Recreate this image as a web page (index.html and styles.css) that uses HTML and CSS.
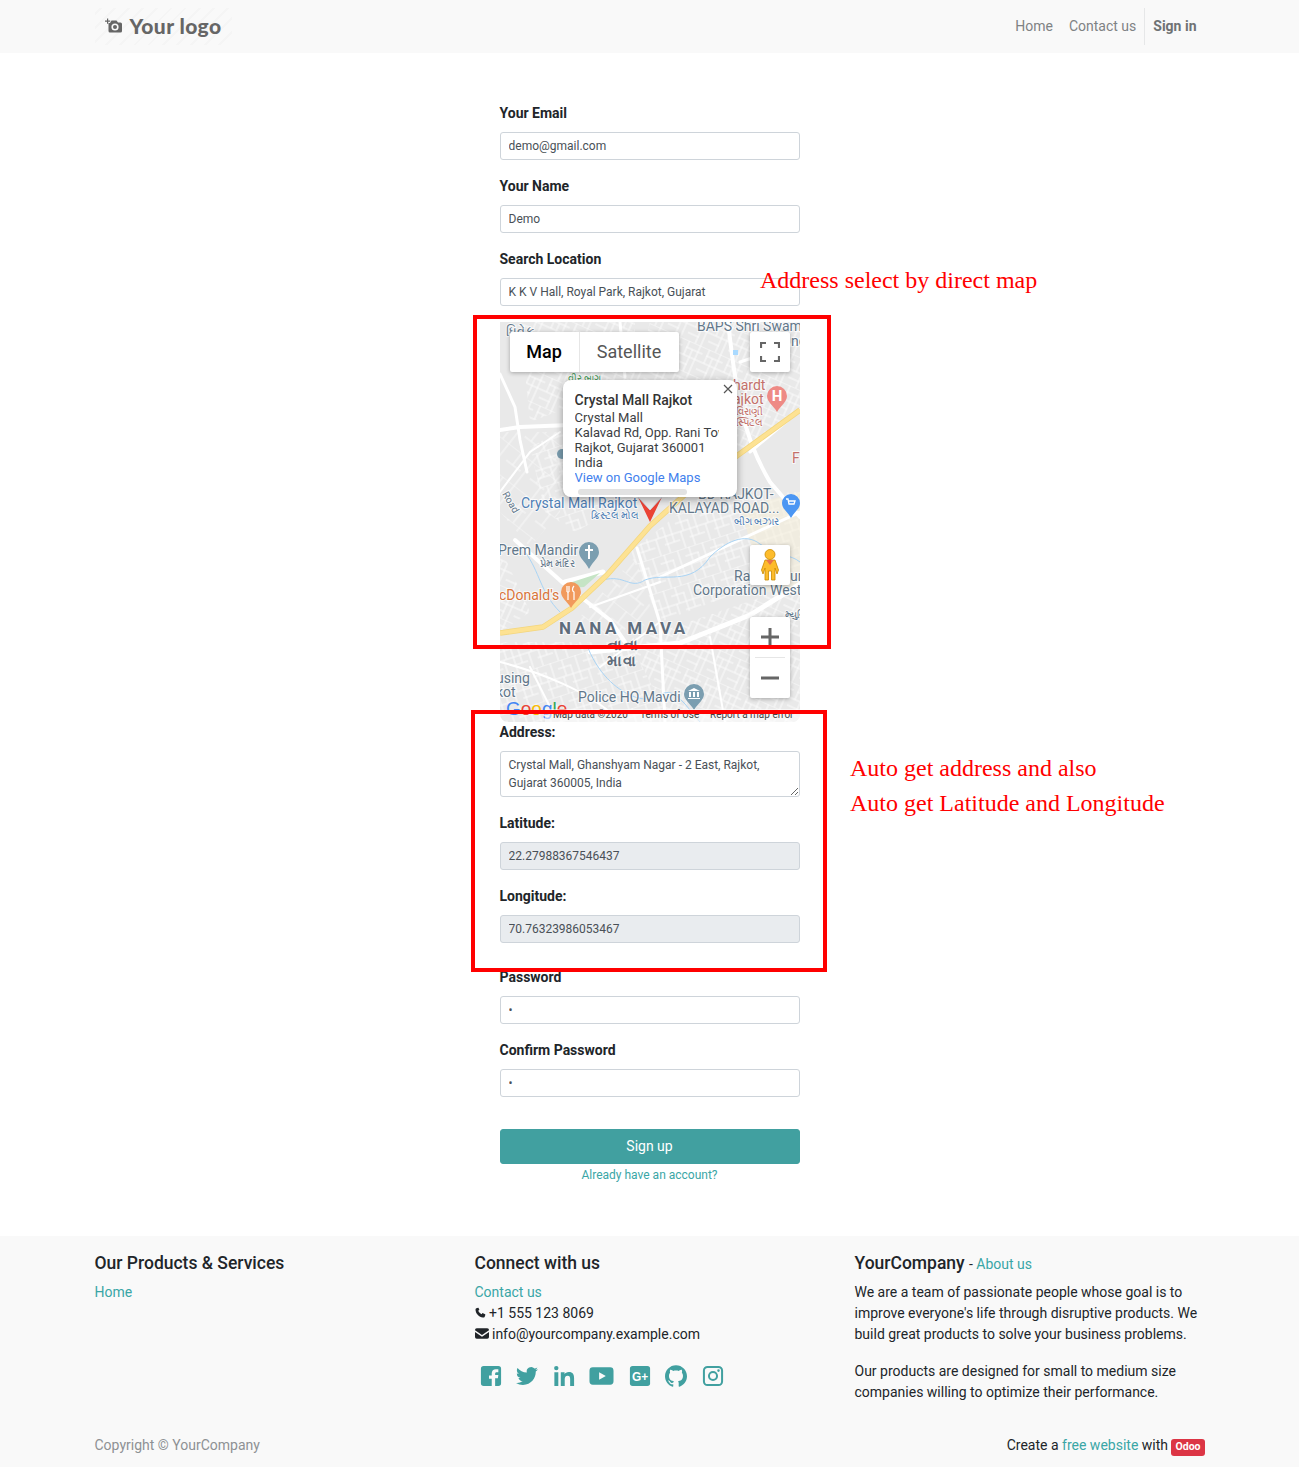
FILE: index.html
```html
<!DOCTYPE html>
<html lang="en">
  <head>
    <meta charset="UTF-8" />
    <title>Sign up | YourCompany</title>
    <link rel="stylesheet" href="styles.css">
  </head>
  <body>
    <header class="navbar">
      <div class="navbar-inner">
        <a class="logo" href="#">
          <svg class="logo-icon" viewBox="0 0 18 16">
            <path d="M2 0.5h1.2v2H5.2v1.2H3.2v2H2v-2H0V2.500h2z" />
            <path d="M3.500 5h1.500l1.500-2.500h5L13 4.500h2.500a1.500 1.500 0 0 1 1.500 1.500v7a1.500 1.500 0 0 1-1.500 1.500H5a1.500 1.500 0 0 1-1.500-1.500z" />
            <circle cx="10" cy="9" r="3.600" fill="#f9f9f9" />
            <circle cx="10" cy="9" r="2" />
          </svg>
          <span>Your logo</span>
        </a>
        <nav class="nav">
          <a href="#">Home</a>
          <a href="#">Contact us</a>
          <a class="nav-signin" href="#">Sign in</a>
        </nav>
      </div>
    </header>

    <main class="page">
      <form class="signup">
        <div class="field">
          <label>Your Email</label>
          <input type="text" value="demo@gmail.com" />
        </div>
        <div class="field">
          <label>Your Name</label>
          <input type="text" value="Demo" />
        </div>
        <div class="field">
          <label>Search Location</label>
          <input type="text" value="K K V Hall, Royal Park, Rajkot, Gujarat" />
        </div>

        <div class="map">
          <svg class="map-canvas" viewBox="0 0 300 400">
            <defs>
              <pattern id="streets" width="26" height="34" patternUnits="userSpaceOnUse" patternTransform="rotate(-18)">
                <path d="M0 0H26M0 8H14M0 17H26M10 25H26M6 0V17M13 8V34M20 0V25M3 17V34" stroke="#fbfbfb" stroke-width="1" fill="none" />
              </pattern>
              <pattern id="streets2" width="22" height="30" patternUnits="userSpaceOnUse" patternTransform="rotate(24)">
                <path d="M0 0H22M4 7H22M0 15H22M0 23H12M5 0V15M11 7V30M17 0V30" stroke="#fbfbfb" stroke-width="1" fill="none" />
              </pattern>
              <pattern id="streets3" width="30" height="30" patternUnits="userSpaceOnUse" patternTransform="rotate(38)">
                <path d="M0 0H30M0 15H18M8 0V15M22 0V30M14 15V30" stroke="#f8f8f8" stroke-width="1" fill="none" />
              </pattern>
            </defs>
            <rect width="300" height="400" fill="#e9e9e9" />
            <path d="M30 100L135 60V0H20z" fill="url(#streets2)" />
            <path d="M0 110H70L60 190 30 225 0 190z" fill="url(#streets3)" />
            <path d="M30 125L60 110 130 180 75 210 45 190z" fill="url(#streets)" />
            <path d="M0 225L30 290 0 310z" fill="url(#streets2)" />
            <path d="M0 320H130L170 400H0z" fill="url(#streets)" />
            <path d="M130 320L300 262V400H170z" fill="url(#streets2)" />
            <path d="M130 230L160 300 240 270 300 265V170L200 175z" fill="url(#streets)" />
            <path d="M75 300L135 235 155 300 110 315z" fill="url(#streets3)" />
            <path d="M150 0H300V85L170 180 135 60z" fill="url(#streets2)" />
            <path d="M240 185L300 170V270L265 270z" fill="#f6efd9" opacity=".55" />

            <g fill="none" stroke="#fff" stroke-linecap="round" stroke-linejoin="round">
              <path d="M0 108L20 105 70 103" stroke-width="4" />
              <path d="M0 52L15 85 20 118 27 150" stroke-width="3" />
              <path d="M0 170L30 130 60 110" stroke-width="2" />
              <path d="M15 218L63 261 110 298 125 320" stroke-width="4" />
              <path d="M65 260L103 250" stroke-width="5" />
              <path d="M137 226L160 301 165 400" stroke-width="3" />
              <path d="M90 330L180 321 250 293 300 262" stroke-width="5" />
              <path d="M90 285L160 260" stroke-width="2" />
              <path d="M160 300L100 345" stroke-width="2" />
              <path d="M160 255L300 190" stroke-width="3" />
              <path d="M228 0C235 60 240 110 270 160L300 195" stroke-width="4" />
              <path d="M240 40L300 20" stroke-width="3" />
              <path d="M255 0L262 40" stroke-width="5" />
              <path d="M300 88L250 130" stroke-width="3" />
              <path d="M0 340C40 350 90 370 115 395" stroke-width="2" />
              <path d="M30 345L55 395" stroke-width="2" />
              <path d="M210 315L225 400" stroke-width="2" />
              <path d="M120 0L125 55" stroke-width="3" />
            </g>
            <g fill="none" stroke="#a9d4f5" stroke-width="1">
              <path d="M25 230C40 250 40 270 60 290" />
              <path d="M103 258C125 252 130 268 145 258C165 250 190 265 210 235C225 220 245 210 260 222 280 235 290 232 300 240" />
              <path d="M88 326C100 355 120 370 135 375 165 385 160 355 185 382L200 400" />
            </g>
            <path d="M66 262L100 251 84 265 70 266z" fill="#c5e4c5" />
            <rect x="233" y="28" width="5" height="5" fill="#aadaff" />
            <path d="M0 311L43 305 72 286 107 253 150 204 190 168 300 88" fill="none" stroke="#f3d67e" stroke-width="5.500" stroke-linejoin="round" />
            <path d="M0 311L43 305 72 286 107 253 150 204 190 168 300 88" fill="none" stroke="#fde293" stroke-width="4" stroke-linejoin="round" />

            <g class="map-label map-label-grey">
              <text x="197" y="9">BAPS Shri Swam</text>
              <text x="6" y="14" font-size="13">ધિવેક</text>
              <text x="291" y="24">nd</text>
              <text x="-2" y="233">Prem Mandir</text>
              <text x="234" y="259">Ra</text>
              <text x="290" y="259">ur</text>
              <text x="193" y="273">Corporation West</text>
              <text x="-4" y="361">using</text>
              <text x="-4" y="375">kot</text>
              <text x="78" y="380">Police HQ Mavdi</text>
              <text x="198" y="177">BD RAJKOT-</text>
              <text x="169" y="191">KALAYAD ROAD...</text>
              <text class="map-label-small" x="40" y="245">પ્રેમ મંદિર</text>
              <text class="map-label-small" x="285" y="296">મ્યુનિ</text>
              <text class="map-label-small" transform="rotate(60 2 172)" x="2" y="172">Road</text>
            </g>
            <g class="map-label map-label-blue">
              <text x="21" y="186">Crystal Mall Rajkot</text>
              <text class="map-label-small" x="91" y="197">ક્રિસ્ટલ મોલ</text>
              <text class="map-label-small" x="234" y="203">બીગ બઝાર</text>
              <text class="map-label-small map-label-green" x="68" y="60">વીર બાગ</text>
            </g>
            <text class="map-label map-label-orange" x="-1" y="278">cDonald's</text>
            <g class="map-label map-label-red">
              <text x="233" y="68">hardt</text>
              <text x="233" y="82">ajkot</text>
              <text class="map-label-small" x="236" y="93">વિરાણી</text>
              <text class="map-label-small" x="236" y="104">સ્પિટલ</text>
              <text x="292" y="141">F</text>
            </g>
            <text class="map-label map-area" x="59" y="312">NANA MAVA</text>
            <text class="map-label map-area map-area-local" x="107" y="328">નાના</text>
            <text class="map-label map-area map-area-local" x="107" y="344">માવા</text>

            <!-- place pins -->
            <path d="M277 64a10 10 0 0 1 10 10c0 6-6 9-10 16c-4-7-10-10-10-16a10 10 0 0 1 10-10z" fill="#ee8a85" />
            <text class="pin-text" x="277" y="79">H</text>
            <path d="M291 172a9 9 0 0 1 9 9c0 6-5 8-9 15c-4-7-9-9-9-15a9 9 0 0 1 9-9z" fill="#4b96f3" />
            <path d="M286 177h2l1 5h5l1-3h-6" fill="none" stroke="#fff" stroke-width="1.300" />
            <path d="M89 220a10 10 0 0 1 10 10c0 6-6 9-10 17c-4-8-10-11-10-17a10 10 0 0 1 10-10z" fill="#7b9eb0" />
            <path d="M89 223v14M85 228h8" stroke="#fff" stroke-width="2" />
            <path d="M71 260a10 10 0 0 1 10 10c0 6-6 9-10 16c-4-7-10-10-10-16a10 10 0 0 1 10-10z" fill="#f19a5c" />
            <path d="M67 264v6m2-6v6m-2 0h2m-1 0v8M74 264c-2 2-2 5 0 6v8" stroke="#fff" stroke-width="1.200" fill="none" />
            <path d="M194 362a10 10 0 0 1 10 10c0 6-6 9-10 16c-4-7-10-10-10-16a10 10 0 0 1 10-10z" fill="#7b9eb0" />
            <path d="M188 369l6-3 6 3zM189 370h2v5h-2zM193 370h2v5h-2zM197 370h2v5h-2zM188 376h12v1h-12z" fill="#fff" />
            <circle cx="62" cy="132" r="5" fill="#7b9eb0" />

            <!-- selected marker -->
            <path d="M138 175L150 200 162 175 150 188z" fill="#ea4335" />
            <path d="M138 175L150 188 162 175" fill="none" stroke="#c5e4f3" stroke-width="1" opacity=".8" />

            <text class="map-google" x="6" y="393"><tspan fill="#4285f4">G</tspan><tspan fill="#ea4335">o</tspan><tspan fill="#fbbc05">o</tspan><tspan fill="#4285f4">g</tspan><tspan fill="#34a853">l</tspan><tspan fill="#ea4335">e</tspan></text>
            <rect x="45" y="387" width="255" height="13" fill="#fff" opacity=".55" />
            <g class="map-attr">
              <text x="53" y="396">Map data ©2020</text>
              <text x="140" y="396">Terms of Use</text>
              <text x="210" y="396">Report a map error</text>
            </g>
          </svg>

          <div class="map-type">
            <span class="map-type-on">Map</span>
            <span class="map-type-off">Satellite</span>
          </div>
          <button class="map-btn map-fullscreen" type="button">
            <svg viewBox="-1 -1 20 20" width="20" height="20">
              <path d="M0 5V0h5M13 0h5v5M18 13v5h-5M5 18H0v-5" fill="none" stroke="#666" stroke-width="2.200" />
            </svg>
          </button>
          <button class="map-btn map-pegman" type="button">
            <svg viewBox="0 0 20 32" width="20" height="32">
              <circle cx="10" cy="5.500" r="5" fill="#fdbc2c" stroke="#c98a00" stroke-width=".8" />
              <path d="M5 11h10l3.500 10-1.500 4-2-6v12h-3.500v-9h-3v9H5V19l-2 6-1.500-4z" fill="#fdbc2c" stroke="#c98a00" stroke-width=".8" />
              <path d="M6 11l4 5 4-5z" fill="#e8734a" />
            </svg>
          </button>
          <div class="map-btn map-zoom">
            <span class="zoom-step"><svg viewBox="0 0 18 18" width="18" height="18"><path d="M9 0v18M0 9h18" stroke="#666" stroke-width="3" /></svg></span>
            <span class="zoom-line"></span>
            <span class="zoom-step"><svg viewBox="0 0 18 18" width="18" height="18"><path d="M0 9h18" stroke="#666" stroke-width="3" /></svg></span>
          </div>

          <div class="popup">
            <svg class="popup-close" viewBox="0 0 10 10"><path d="M1 1l8 8M9 1l-8 8" stroke="#555" stroke-width="1.200" /></svg>
            <div class="popup-body">
              <strong>Crystal Mall Rajkot</strong>
              <span>Crystal Mall</span>
              <span>Kalavad Rd, Opp. Rani Tower</span>
              <span>Rajkot, Gujarat 360001</span>
              <span>India</span>
              <a href="#">View on Google Maps</a>
            </div>
            <div class="popup-scroll"></div>
          </div>
        </div>

        <div class="field">
          <label>Address:</label>
          <textarea rows="2">Crystal Mall, Ghanshyam Nagar - 2 East, Rajkot, Gujarat 360005, India</textarea>
        </div>
        <div class="field">
          <label>Latitude:</label>
          <input class="readonly" type="text" value="22.27988367546437" readonly />
        </div>
        <div class="field field-last">
          <label>Longitude:</label>
          <input class="readonly" type="text" value="70.76323986053467" readonly />
        </div>
        <div class="field">
          <label>Password</label>
          <input type="password" value="d" />
        </div>
        <div class="field">
          <label>Confirm Password</label>
          <input type="password" value="d" />
        </div>

        <button class="btn-signup" type="button">Sign up</button>
        <a class="login-link" href="#">Already have an account?</a>
      </form>

      <!-- annotations drawn on top of the screenshot -->
      <div class="mark mark-map"></div>
      <div class="mark mark-address"></div>
      <p class="note note-map">Address select by direct map</p>
      <p class="note note-address">Auto get address and also<br />Auto get Latitude and Longitude</p>
    </main>

    <footer class="footer">
      <div class="footer-cols">
        <section>
          <h5>Our Products &amp; Services</h5>
          <a href="#">Home</a>
        </section>
        <section>
          <h5>Connect with us</h5>
          <a href="#">Contact us</a>
          <div class="contact-line">
            <svg class="contact-icon" viewBox="0 0 24 24"><path d="M6.600 1.500L3 2.800C1.500 3.500 1 5 1.200 7c.8 8 7.800 15 15.800 15.800 2 .2 3.500-.3 4.200-1.800l1.300-3.600c.2-.6 0-1.100-.5-1.400l-4.500-2.600c-.5-.3-1-.2-1.400.2l-1.800 2.100c-3-1.300-6-4.300-7.300-7.300l2.100-1.800c.4-.4.500-.9.200-1.400L7.700 2c-.3-.5-.6-.7-1.100-.5z" /></svg>
            +1 555 123 8069
          </div>
          <div class="contact-line">
            <svg class="contact-icon contact-mail" viewBox="0 0 24 18"><path d="M0 3a3 3 0 0 1 3-3h18a3 3 0 0 1 3 3v.5l-12 8-12-8zM0 6.500V15a3 3 0 0 0 3 3h18a3 3 0 0 0 3-3V6.500l-12 8z" /></svg>
            info@yourcompany.example.com
          </div>
          <div class="social">
            <svg viewBox="0 0 24 24"><path d="M4 1h16a3 3 0 0 1 3 3v16a3 3 0 0 1-3 3h-3.500v-8.500h3l.5-3.500h-3.500V9.500c0-1 .4-1.700 1.800-1.700H20V4.700c-.4 0-1.400-.2-2.700-.2-2.700 0-4.500 1.600-4.500 4.600V11.500H9.800V15h3v8H4a3 3 0 0 1-3-3V4a3 3 0 0 1 3-3z" /></svg>
            <svg viewBox="0 0 24 24"><path d="M23.953 4.570a10 10 0 0 1-2.825.775 4.958 4.958 0 0 0 2.163-2.723c-.951.555-2.005.959-3.127 1.184a4.920 4.920 0 0 0-8.384 4.482C7.690 8.095 4.067 6.130 1.640 3.162a4.822 4.822 0 0 0-.666 2.475c0 1.710.870 3.213 2.188 4.096a4.904 4.904 0 0 1-2.228-.616v.060a4.923 4.923 0 0 0 3.946 4.827 4.996 4.996 0 0 1-2.212.085 4.936 4.936 0 0 0 4.604 3.417 9.867 9.867 0 0 1-6.102 2.105c-.390 0-.779-.023-1.170-.067a13.995 13.995 0 0 0 7.557 2.209c9.053 0 13.998-7.496 13.998-13.985 0-.210 0-.420-.015-.630A9.935 9.935 0 0 0 24 4.590z" /></svg>
            <svg viewBox="0 0 24 24"><path d="M1.500 8h4.300v15H1.500zM3.600 1a2.400 2.400 0 1 1 0 4.800 2.400 2.400 0 0 1 0-4.800zM8.500 8h4.100v2.100C13.300 8.800 15 7.700 17.300 7.700c4.500 0 5.700 2.900 5.700 6.900V23h-4.300v-7.500c0-2-.3-3.900-2.700-3.900-2.400 0-3.200 1.800-3.200 3.800V23H8.500z" /></svg>
            <svg class="social-wide" viewBox="0 0 26 20"><path d="M4 1h18a3.500 3.500 0 0 1 3.500 3.500v11A3.500 3.500 0 0 1 22 19H4a3.500 3.500 0 0 1-3.500-3.500v-11A3.500 3.500 0 0 1 4 1zM10.500 6v8l7-4z" fill-rule="evenodd" /></svg>
            <svg viewBox="0 0 24 24"><rect x="1" y="1" width="22" height="22" rx="3" /><text class="gplus" x="12" y="17">G+</text></svg>
            <svg viewBox="0 0 24 24"><path d="M12 .297c-6.630 0-12 5.373-12 12 0 5.303 3.438 9.800 8.205 11.385.6.113.82-.258.82-.577 0-.285-.01-1.040-.015-2.040-3.338.724-4.042-1.610-4.042-1.610C4.422 18.070 3.633 17.700 3.633 17.700c-1.087-.744.084-.729.084-.729 1.205.084 1.838 1.236 1.838 1.236 1.070 1.835 2.809 1.305 3.495.998.108-.776.417-1.305.76-1.605-2.665-.3-5.466-1.332-5.466-5.930 0-1.310.465-2.380 1.235-3.220-.135-.303-.54-1.523.105-3.176 0 0 1.005-.322 3.300 1.230.96-.267 1.980-.399 3-.405 1.020.006 2.040.138 3 .405 2.280-1.552 3.285-1.230 3.285-1.230.645 1.653.24 2.873.12 3.176.765.840 1.230 1.910 1.230 3.220 0 4.610-2.805 5.625-5.475 5.920.42.360.81 1.096.81 2.220 0 1.606-.015 2.896-.015 3.286 0 .315.21.69.825.57C20.565 22.092 24 17.592 24 12.297c0-6.627-5.373-12-12-12" /></svg>
            <svg viewBox="0 0 24 24"><path fill-rule="evenodd" d="M6 1h12a5 5 0 0 1 5 5v12a5 5 0 0 1-5 5H6a5 5 0 0 1-5-5V6a5 5 0 0 1 5-5zm0 2.200A2.800 2.800 0 0 0 3.200 6v12A2.800 2.800 0 0 0 6 20.800h12a2.800 2.800 0 0 0 2.800-2.800V6A2.800 2.800 0 0 0 18 3.200zM12 6.500a5.500 5.500 0 1 1 0 11 5.500 5.500 0 0 1 0-11zm0 2.200a3.300 3.300 0 1 0 0 6.600 3.300 3.300 0 0 0 0-6.600zM18 4.700a1.400 1.400 0 1 1 0 2.800 1.400 1.400 0 0 1 0-2.800z" /></svg>
          </div>
        </section>
        <section>
          <h5>YourCompany <small>- <a href="#">About us</a></small></h5>
          <p>We are a team of passionate people whose goal is to improve everyone's life through disruptive products. We build great products to solve your business problems.</p>
          <p>Our products are designed for small to medium size companies willing to optimize their performance.</p>
        </section>
      </div>
      <div class="footer-bottom">
        <span class="copyright">Copyright © YourCompany</span>
        <span class="powered">Create a <a href="#">free website</a> with <span class="badge">Odoo</span></span>
      </div>
    </footer>
  </body>
</html>
```

FILE: styles.css
```css
* {
  box-sizing: border-box;
}

body {
  margin: 0;
  font-family: Roboto, "Noto Sans", sans-serif;
  font-size: 14px;
  line-height: 21px;
  color: #212529;
  background: #fff;
}

a {
  color: #3aa6a6;
  text-decoration: none;
}

/* navbar */
.navbar {
  height: 53px;
  background: #f9f9f9;
}

.navbar-inner {
  width: 1140px;
  height: 53px;
  margin: 0 auto;
  padding: 8px 15px;
  display: flex;
  align-items: center;
  justify-content: space-between;
}

.logo {
  width: 137px;
  height: 37px;
  padding: 0 0 2px 10px;
  display: flex;
  align-items: center;
  gap: 7px;
  font-family: Lato, sans-serif;
  font-size: 21px;
  font-weight: 900;
  letter-spacing: 0.4px;
  color: #666;
  background: repeating-linear-gradient(-45deg, #f9f9f9 0 8px, #f5f5f5 8px 10px);
}

.logo-icon {
  width: 18px;
  height: 16px;
  fill: #666;
}

.nav {
  display: flex;
  align-items: center;
  height: 37px;
}

.nav a {
  padding: 0 8px;
  color: #7f8284;
}

.nav .nav-signin {
  height: 37px;
  line-height: 37px;
  border-left: 1px solid #e6e7e8;
  font-weight: 700;
  color: #6f7274;
}

/* form */
.page {
  position: relative;
  padding: 50px 0 51px;
}

.signup {
  width: 300px;
  margin: 0 auto;
}

.field {
  margin-bottom: 16px;
}

.field-last {
  margin-bottom: 24px;
}

.field label {
  display: block;
  margin-bottom: 8px;
  font-weight: 700;
  color: #212529;
}

.field input,
.field textarea {
  display: block;
  width: 100%;
  height: 28px;
  padding: 4px 8px;
  font-family: inherit;
  font-size: 12px;
  line-height: 18px;
  color: #495057;
  background: #fff;
  border: 1px solid #ced4da;
  border-radius: 3px;
  outline: none;
}

.field textarea {
  height: 46px;
}

.field .readonly {
  background: #e9ecef;
}

.btn-signup {
  display: block;
  width: 100%;
  height: 35px;
  margin-top: 32px;
  padding: 0 0 2px;
  font-family: inherit;
  font-size: 14px;
  color: #fff;
  background: #41a0a0;
  border: 1px solid #41a0a0;
  border-radius: 3px;
}

.login-link {
  display: block;
  margin-top: 1px;
  font-size: 12px;
  line-height: 20px;
  text-align: center;
}

/* map */
.map {
  position: relative;
  height: 400px;
  overflow: hidden;
  border-radius: 0 0 8px 8px;
}

.map-canvas {
  display: block;
  width: 300px;
  height: 400px;
  font-family: Roboto, sans-serif;
  font-size: 14px;
}

.map-label {
  paint-order: stroke;
  stroke: #fff;
  stroke-width: 2px;
  stroke-opacity: 0.7;
}

.map-label-grey {
  fill: #62778a;
}

.map-label-blue {
  fill: #4f7fb5;
}

.map-label-green {
  fill: #4a9a5c;
}

.map-label-orange {
  fill: #d9743a;
}

.map-label-red {
  fill: #c4706a;
}

.map-label-small {
  font-size: 10px;
}

.map-area {
  font-size: 17px;
  font-weight: 700;
  letter-spacing: 3.400px;
  fill: #5f6d7c;
}

.map-area-local {
  font-size: 15px;
  letter-spacing: 1px;
}

.pin-text {
  font-size: 15px;
  font-weight: 700;
  fill: #fff;
  text-anchor: middle;
}

.map-google {
  font-family: "Liberation Sans", sans-serif;
  font-size: 19px;
  stroke-width: 0.4px;
}

.map-attr {
  font-size: 10px;
  fill: #444;
}

.map-type {
  position: absolute;
  top: 10px;
  left: 10px;
  display: flex;
  height: 40px;
  font-size: 18px;
  line-height: 40px;
  background: #fff;
  border-radius: 2px;
  box-shadow: 0 1px 4px rgba(0, 0, 0, 0.3);
}

.map-type-on {
  width: 70px;
  font-weight: 500;
  text-align: center;
  color: #000;
  border-right: 1px solid #e6e6e6;
}

.map-type-off {
  width: 99px;
  text-align: center;
  color: #565656;
}

.map-btn {
  position: absolute;
  right: 10px;
  width: 40px;
  padding: 0;
  display: flex;
  align-items: center;
  justify-content: center;
  background: #fff;
  border: none;
  border-radius: 2px;
  box-shadow: 0 1px 4px rgba(0, 0, 0, 0.3);
}

.map-fullscreen {
  top: 10px;
  height: 40px;
}

.map-pegman {
  top: 223px;
  height: 40px;
}

.map-zoom {
  top: 295px;
  height: 81px;
  flex-direction: column;
}

.zoom-step {
  height: 40px;
  display: flex;
  align-items: center;
}

.zoom-line {
  width: 30px;
  height: 1px;
  background: #e6e6e6;
}

.popup {
  position: absolute;
  top: 58px;
  left: 63px;
  width: 174px;
  height: 117px;
  padding: 12px 18px 0 12px;
  background: #fff;
  border-radius: 8px;
  box-shadow: 0 2px 7px 1px rgba(0, 0, 0, 0.3);
}

.popup-close {
  position: absolute;
  top: 4px;
  right: 4px;
  width: 10px;
  height: 10px;
}

.popup-body {
  overflow: hidden;
  white-space: nowrap;
  font-size: 13px;
  line-height: 15px;
  color: #3c4043;
}

.popup-body strong {
  display: block;
  margin-bottom: 1px;
  font-size: 14px;
  line-height: 17px;
  font-weight: 500;
  color: #333;
}

.popup-body span,
.popup-body a {
  display: block;
}

.popup-body a {
  color: #427fed;
}

.popup-scroll {
  position: absolute;
  left: 15px;
  bottom: 2px;
  width: 109px;
  height: 6px;
  background: #e2e2e2;
  border-radius: 3px;
}

/* red annotations */
.mark {
  position: absolute;
  border: 4px solid #ff0000;
  pointer-events: none;
}

.mark-map {
  top: 262px;
  left: 473px;
  width: 358px;
  height: 334px;
}

.mark-address {
  top: 657px;
  left: 471px;
  width: 356px;
  height: 262px;
}

.note {
  position: absolute;
  margin: 0;
  font-family: "Liberation Serif", serif;
  font-size: 24px;
  line-height: 35px;
  color: #ff0000;
}

.note-map {
  top: 210px;
  left: 760px;
}

.note-address {
  top: 698px;
  left: 850px;
}

/* footer */
.footer {
  height: 231px;
  padding-top: 16px;
  background: #f9f9f9;
}

.footer-cols {
  width: 1140px;
  margin: 0 auto;
  display: grid;
  grid-template-columns: repeat(3, 380px);
}

.footer-cols section {
  padding: 0 15px;
}

.footer-cols section > a {
  display: block;
}

.footer h5 {
  margin: 0 0 8px;
  font-size: 17.500px;
  line-height: 22px;
  font-weight: 500;
}

.footer h5 small {
  font-size: 14px;
  line-height: 1;
  font-weight: 400;
}

.footer p {
  margin: 0 0 16px;
}

.contact-icon {
  width: 11px;
  height: 11px;
  fill: #212529;
}

.contact-mail {
  width: 14px;
}

.social {
  display: flex;
  align-items: center;
  gap: 14.500px;
  margin-top: 20px;
  padding-left: 5px;
}

.social svg {
  width: 22px;
  height: 22px;
  fill: #41a0a0;
}

.social .social-wide {
  width: 25px;
}

.gplus {
  font-family: "Liberation Sans", sans-serif;
  font-size: 13px;
  font-weight: 700;
  fill: #fff;
  text-anchor: middle;
}

.footer-bottom {
  width: 1140px;
  margin: 16px auto 0;
  padding: 0 15px;
  display: flex;
  justify-content: space-between;
}

.copyright {
  color: #8e9194;
}

.badge {
  display: inline-block;
  padding: 3px 4px;
  font-size: 10.500px;
  font-weight: 700;
  line-height: 1;
  color: #fff;
  background: #dc3545;
  border-radius: 3px;
}
```
